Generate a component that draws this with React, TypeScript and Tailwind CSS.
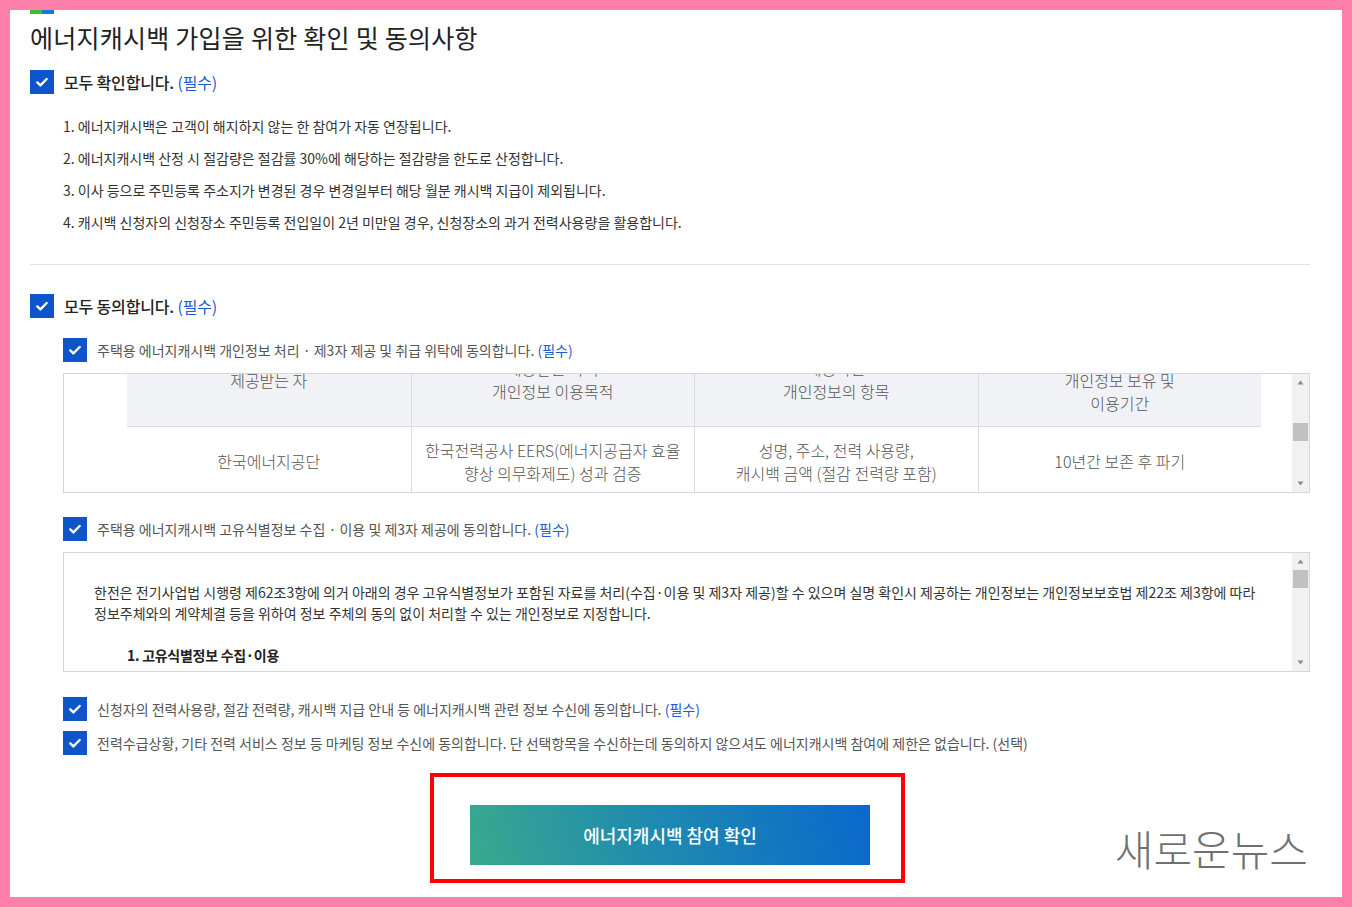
const Check = () => (
  <span className="flex h-6 w-6 shrink-0 items-center justify-center bg-[#0d55c8]">
    <svg width="14" height="14" viewBox="0 0 14 14">
      <path d="M2.3 7.4l3.1 3L11.7 4" fill="none" stroke="white" strokeWidth="2.4" strokeLinecap="round" strokeLinejoin="round" />
    </svg>
  </span>
);

const Req = () => <span className="text-[#1d5bd1]">(필수)</span>;

const ScrollBar = ({ thumb }: { thumb: string }) => (
  <div className="flex w-[17px] shrink-0 flex-col bg-[#f1f1f1]">
    <div className="flex h-[17px] items-center justify-center">
      <svg width="7" height="5" viewBox="0 0 7 5"><path d="M3.5 0.5L6.5 4.5H0.5z" fill="#8a8a8a" /></svg>
    </div>
    <div className="relative flex-1">
      <div className={`absolute left-[1px] right-[1px] h-[18px] bg-[#c1c1c1] ${thumb}`} />
    </div>
    <div className="flex h-[17px] items-center justify-center">
      <svg width="7" height="5" viewBox="0 0 7 5"><path d="M3.5 4.5L6.5 0.5H0.5z" fill="#8a8a8a" /></svg>
    </div>
  </div>
);

const SubRow = ({ children }: { children: React.ReactNode }) => (
  <div className="ml-[33px] flex items-center gap-[10px] text-[14px] text-[#555]">
    <Check />
    <span>{children}</span>
  </div>
);

const App = () => {
  return (
    <div className="h-[907px] bg-[#fe7fa9] p-[10px] font-['Noto_Sans_CJK_KR','Noto_Sans',sans-serif]">
      <main className="relative h-full bg-white pl-[20px] pr-[32px]">
        <div className="flex h-[4px] w-[24px]">
          <div className="w-1/2 bg-[#3cbf2e]" />
          <div className="w-1/2 bg-[#0f7ae0]" />
        </div>
        <h1 className="mt-[7px] text-[25px] leading-[32px] tracking-[0.01em] text-[#222]">
          에너지캐시백 가입을 위한 확인 및 동의사항
        </h1>

        <div className="mt-[17px] flex items-center gap-[10px] text-[16px] tracking-[-0.01em]">
          <Check />
          <span className="font-medium text-[#222]">
            모두 확인합니다. <span className="font-normal"><Req /></span>
          </span>
        </div>
        <ol className="mt-[16px] pl-[33px] text-[14px] leading-[32px] text-[#333]">
          <li>1. 에너지캐시백은 고객이 해지하지 않는 한 참여가 자동 연장됩니다.</li>
          <li>2. 에너지캐시백 산정 시 절감량은 절감률 30%에 해당하는 절감량을 한도로 산정합니다.</li>
          <li>3. 이사 등으로 주민등록 주소지가 변경된 경우 변경일부터 해당 월분 캐시백 지급이 제외됩니다.</li>
          <li>4. 캐시백 신청자의 신청장소 주민등록 전입일이 2년 미만일 경우, 신청장소의 과거 전력사용량을 활용합니다.</li>
        </ol>

        <div className="mt-[26px] border-t border-[#e3e3e3]" />

        <div className="mt-[29px] flex items-center gap-[10px] text-[16px] tracking-[-0.01em]">
          <Check />
          <span className="font-medium text-[#222]">
            모두 동의합니다. <span className="font-normal"><Req /></span>
          </span>
        </div>

        <div className="mt-[20px]">
          <SubRow>
            주택용 에너지캐시백 개인정보 처리 · 제3자 제공 및 취급 위탁에 동의합니다. <Req />
          </SubRow>
        </div>

        <div className="ml-[33px] mt-[11px] flex h-[120px] border border-[#d3d6da]">
          <div className="flex-1 overflow-hidden pl-[63px] pr-[31px] text-[16px] font-light leading-[23px] text-[#555]">
            <div className="-mt-[28px] grid h-[80px] grid-cols-4 bg-[#f1f2f5] text-center">
              <div className="pt-[23px]">제공받는 자</div>
              <div className="border-l border-[#dcdcdc] pt-[11px]">제공받는 자의<br />개인정보 이용목적</div>
              <div className="border-l border-[#dcdcdc] pt-[11px]">제공하는<br />개인정보의 항목</div>
              <div className="border-l border-[#dcdcdc] pt-[23px]">개인정보 보유 및<br />이용기간</div>
            </div>
            <div className="grid h-[70px] grid-cols-4 border-t border-[#dcdcdc] text-center">
              <div className="flex items-center justify-center">한국에너지공단</div>
              <div className="flex items-center justify-center border-l border-[#dcdcdc]">한국전력공사 EERS(에너지공급자 효율<br />향상 의무화제도) 성과 검증</div>
              <div className="flex items-center justify-center border-l border-[#dcdcdc]">성명, 주소, 전력 사용량,<br />캐시백 금액 (절감 전력량 포함)</div>
              <div className="flex items-center justify-center border-l border-[#dcdcdc]">10년간 보존 후 파기</div>
            </div>
          </div>
          <ScrollBar thumb="top-[32px]" />
        </div>

        <div className="mt-[24px]">
          <SubRow>
            주택용 에너지캐시백 고유식별정보 수집 · 이용 및 제3자 제공에 동의합니다. <Req />
          </SubRow>
        </div>

        <div className="ml-[33px] mt-[11px] flex h-[120px] border border-[#d3d6da]">
          <div className="flex-1 overflow-hidden pl-[30px] pt-[29px] text-[14px] leading-[21px] text-[#333]">
            <p className="whitespace-nowrap">
              한전은 전기사업법 시행령 제62조3항에 의거 아래의 경우 고유식별정보가 포함된 자료를 처리(수집·이용 및 제3자 제공)할 수 있으며 실명 확인시 제공하는 개인정보는 개인정보보호법 제22조 제3항에 따라
              <br />
              정보주체와의 계약체결 등을 위하여 정보 주체의 동의 없이 처리할 수 있는 개인정보로 지정합니다.
            </p>
            <p className="ml-[33px] mt-[21px] text-[14px] font-semibold tracking-[-0.02em] text-[#222]">1. 고유식별정보 수집·이용</p>
            <p className="ml-[33px] mt-[4px] whitespace-nowrap">
              한전은 에너지캐시백 참여 확인 및 캐시백 지급을 위하여 아래와 같이 고유식별정보를 수집·이용합니다.
            </p>
          </div>
          <ScrollBar thumb="top-[0px]" />
        </div>

        <div className="mt-[25px]">
          <SubRow>
            신청자의 전력사용량, 절감 전력량, 캐시백 지급 안내 등 에너지캐시백 관련 정보 수신에 동의합니다. <Req />
          </SubRow>
        </div>
        <div className="mt-[10px]">
          <SubRow>
            전력수급상황, 기타 전력 서비스 정보 등 마케팅 정보 수신에 동의합니다. 단 선택항목을 수신하는데 동의하지 않으셔도 에너지캐시백 참여에 제한은 없습니다. (선택)
          </SubRow>
        </div>

        <div className="ml-[400px] mt-[18px] w-[475px] border-4 border-[#ff0000] pb-[14px] pl-[36px] pt-[28px]">
          <button className="flex h-[60px] w-[400px] items-center justify-center bg-[linear-gradient(75deg,#3aa98d_0%,#1f8bb0_45%,#0a68cc_100%)] text-[18px] font-medium text-white">
            에너지캐시백 참여 확인
          </button>
        </div>

        <div className="absolute right-[34px] top-[806px] text-[42px] font-extralight text-[#707070]">
          새로운뉴스
        </div>
      </main>
    </div>
  );
};

export default App;
